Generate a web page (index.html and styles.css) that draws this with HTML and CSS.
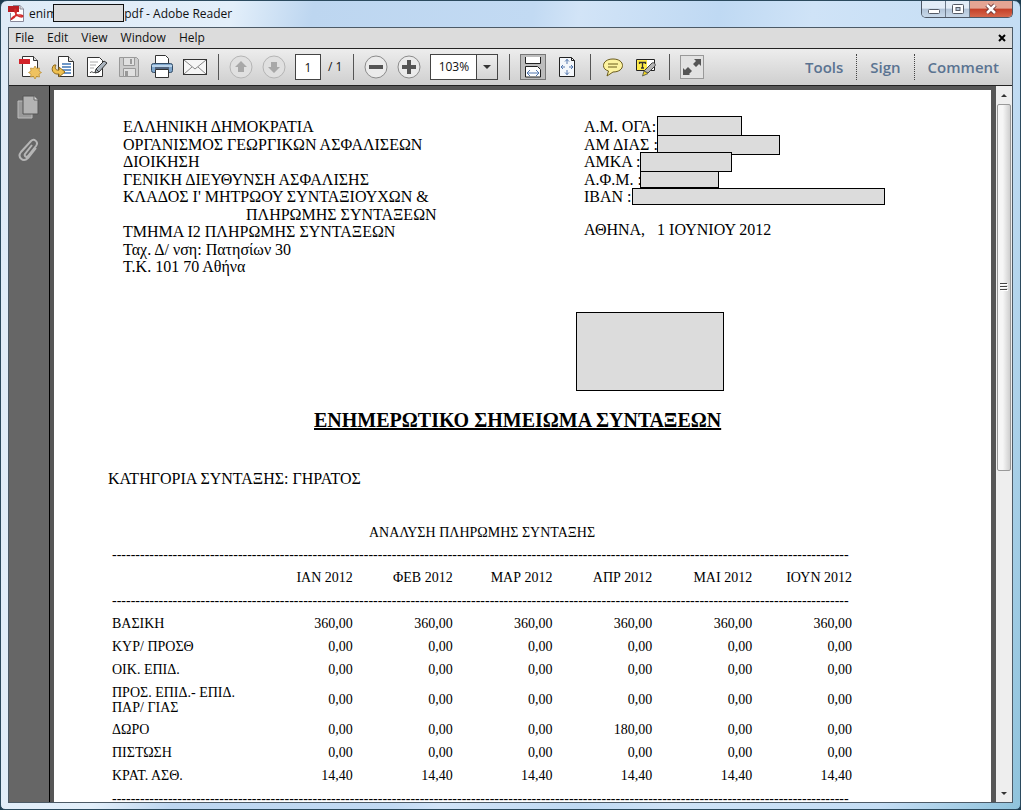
FILE: index.html
```html
<!DOCTYPE html>
<html lang="el">
<head>
<meta charset="utf-8">
<title>Adobe Reader</title>
<link rel="stylesheet" href="styles.css">
</head>
<body>
<div class="window">
  <header class="titlebar">
    <svg class="app-icon" width="17" height="17" viewBox="0 0 17 17"><path d="M5 .5h7l3.500 3.500v12.500H2.500V8" fill="#fff" stroke="#889"/><path d="M12 .5V4h3.500" fill="#ddd" stroke="#889"/><path d="M0 1h11v6H0z" fill="#b91f24"/><path d="M4 14c3-1 5-5 4-9-1-2-2 0-1 2 1 3 4 5 7 5 2-1 0-2-2-2-3 0-6 1-8 3-1 1-1 2 0 1z" fill="none" stroke="#d22a2a" stroke-width="1.300"/></svg>
    <h1 class="title">enim<span class="title-mask"></span>pdf - Adobe Reader</h1>
    <div class="controls">
      <button class="ctl" aria-label="Minimize"><svg width="14" height="12" viewBox="0 0 14 12"><rect x="1.500" y="6.500" width="11" height="4" rx="1" fill="#fff" stroke="#555b66"/></svg></button>
      <button class="ctl" aria-label="Maximize"><svg width="14" height="12" viewBox="0 0 14 12"><rect x="1.500" y="1.500" width="11" height="9" rx="1" fill="#fff" stroke="#555b66"/><rect x="5" y="4.500" width="4" height="3" fill="#b9c9dc" stroke="#555b66"/></svg></button>
      <button class="ctl ctl-close" aria-label="Close"><svg width="14" height="12" viewBox="0 0 14 12"><path d="M3 2l8 8M11 2l-8 8" stroke="#6b3434" stroke-width="4.500"/><path d="M3 2l8 8M11 2l-8 8" stroke="#fff" stroke-width="2.500"/></svg></button>
    </div>
  </header>
  <div class="client">
    <nav class="menubar">
      <button class="menu">File</button><button class="menu">Edit</button><button class="menu">View</button><button class="menu">Window</button><button class="menu">Help</button>
      <button class="menu-close" aria-label="Close document"><svg width="8" height="8" viewBox="0 0 8 8"><path d="M1 1l6 6M7 1L1 7" stroke="#000" stroke-width="2"/></svg></button>
    </nav>
    <div class="toolbar">
      <button class="tool" aria-label="Create PDF"><svg width="24" height="24" viewBox="0 0 24 24"><path d="M4.500 1.500h11l4 4v16h-15z" fill="#fff" stroke="#333"/><path d="M15.500 1.500v4h4" fill="#ddd" stroke="#333"/><path d="M1 4h11v5H1z" fill="#d2232a"/><path d="M17 11l1.500 2.500 3-.5-.5 3 2.500 1.500-2.500 1.500.5 3-3-.5L17 24l-1.500-2.500-3 .5.500-3-2.500-1.500L13 16l-.5-3 3 .5z" fill="#efc260" stroke="#b98a2c" stroke-width=".7"/></svg></button>
      <button class="tool" aria-label="Open"><svg width="24" height="24" viewBox="0 0 24 24"><path d="M7.500 1.500h10l5 5v15h-15z" fill="#fff" stroke="#333"/><path d="M17.500 1.500v5h5" fill="#ddd" stroke="#333"/><path d="M11 9h9M11 12h9M11 15h9M13 18h7" stroke="#3f75b5" stroke-width="1.500"/><path d="M3 10c-4 4-1 10 5 9v3l6-5-6-5v3c-3 1-5-2-3-5z" fill="#efc050" stroke="#8d691f"/></svg></button>
      <button class="tool" aria-label="Edit"><svg width="24" height="24" viewBox="0 0 24 24"><path d="M3.500 2.500h12l3 3v16h-15z" fill="#fff" stroke="#333"/><path d="M6 7h8M6 10h6M6 13h4" stroke="#aaa"/><path d="M6 18c2-3 3 1 5-1" stroke="#333" fill="none"/><path d="M11 18l1-4 8-8 3 2-8 9z" fill="#aab4be" stroke="#333"/><path d="M12 14l3 3" stroke="#333"/></svg></button>
      <button class="tool" aria-label="Save" disabled><svg width="24" height="24" viewBox="0 0 24 24"><path d="M2.500 2.500h17l2 2v17h-19z" fill="#ccc" stroke="#999"/><path d="M6.500 2.500h11v8h-11zM6.500 13.500h12v8h-12z" fill="#e0e0e0" stroke="#999"/><path d="M13 4h2v5h-2zM8 16h3v5H8z" fill="#999"/></svg></button>
      <button class="tool" aria-label="Print"><svg width="24" height="24" viewBox="0 0 24 24"><path d="M5.500.5h10l3 3v8h-13z" fill="#fff" stroke="#333"/><rect x="1.500" y="8.500" width="21" height="9" rx="2" fill="#7fa6cc" stroke="#334c66"/><path d="M2 11h20" stroke="#b9d3ea" stroke-width="2"/><path d="M5 13h14" stroke="#223"/><path d="M5.500 14.500h13v8h-13z" fill="#fff" stroke="#333"/></svg></button>
      <button class="tool" aria-label="Email"><svg width="24" height="24" viewBox="0 0 24 24"><rect x=".5" y="4.500" width="23" height="15" fill="#f6f6f6" stroke="#333"/><path d="M1 5l11 9 11-9M1 19l8-7M23 19l-8-7" fill="none" stroke="#888"/></svg></button>
      <span class="sep"></span>
      <button class="tool" aria-label="Previous page" disabled><svg width="24" height="24" viewBox="0 0 24 24"><circle cx="12" cy="12" r="11" fill="#e0e0e0" stroke="#b4b4b4"/><path d="M12 6l6 6h-3v5H9v-5H6z" fill="#a8a8a8"/></svg></button>
      <button class="tool" aria-label="Next page" disabled><svg width="24" height="24" viewBox="0 0 24 24"><circle cx="12" cy="12" r="11" fill="#e0e0e0" stroke="#b4b4b4"/><path d="M12 18l6-6h-3V7H9v5H6z" fill="#a8a8a8"/></svg></button>
      <input class="page-input" aria-label="Page" value="1"><span class="page-total">/ 1</span>
      <span class="sep"></span>
      <button class="tool" aria-label="Zoom out"><svg width="24" height="24" viewBox="0 0 24 24"><circle cx="12" cy="12" r="11" fill="#ebebeb" stroke="#8a8a8a"/><path d="M5 10h14v4H5z" fill="#555"/></svg></button>
      <button class="tool" aria-label="Zoom in"><svg width="24" height="24" viewBox="0 0 24 24"><circle cx="12" cy="12" r="11" fill="#ebebeb" stroke="#8a8a8a"/><path d="M5 10h5V5h4v5h5v4h-5v5h-4v-5H5z" fill="#555"/></svg></button>
      <div class="zoom"><input class="zoom-input" aria-label="Zoom" value="103%"><button class="zoom-drop" aria-label="Zoom levels"><svg width="8" height="4" viewBox="0 0 8 4"><path d="M0 0h8L4 4z" fill="#333"/></svg></button></div>
      <span class="sep"></span>
      <button class="tool tool-on" aria-label="Fit width"><svg width="20" height="22" viewBox="0 0 20 22"><path d="M2.500 1v6.500h15V1" fill="#fff" stroke="#222"/><path d="M2.500 21V10.500h12l3 3V21z" fill="#fff" stroke="#222"/><path d="M4 17h12M7 14l-3 3 3 3M13 14l3 3-3 3" fill="none" stroke="#5277ae"/></svg></button>
      <button class="tool" aria-label="Fit page"><svg width="24" height="22" viewBox="0 0 24 22"><path d="M4.500 1.500h12l3 3v16h-15z" fill="#f4f7fb" stroke="#222"/><path d="M16.500 1.500v3h3" fill="none" stroke="#222"/><path d="M12 3v5M12 19v-5M6 11h4M18 11h-4M10 5.500l2-2 2 2M10 16.500l2 2 2-2M8 9l-2 2 2 2M16 9l2 2-2 2" fill="none" stroke="#5277ae"/></svg></button>
      <span class="sep"></span>
      <button class="tool" aria-label="Add comment"><svg width="24" height="20" viewBox="0 0 24 20"><path d="M12 2c6 0 9.500 3 9.500 6.500S18 15 12 15l-6 4 1.500-5C4 13 2.500 11 2.500 8.500 2.500 5 6 2 12 2z" fill="#fdf3a0" stroke="#6b5c1c"/><path d="M7 7h10M7 10h9" stroke="#6b5c1c"/></svg></button>
      <button class="tool" aria-label="Highlight text"><svg width="24" height="20" viewBox="0 0 24 20"><path d="M2.500 2.500h18v11h-18z" fill="#fff" stroke="#222"/><path d="M3 3h10v10H3z" fill="#ffec4a"/><path d="M5.500 7V5.500h6V7M8.500 5.500V11M7 11h3" stroke="#333" fill="none" stroke-width="1.300"/><path d="M10 14l8-8c2-1 4 1 3 3l-7 7z" fill="#b5b5b5" stroke="#444"/><path d="M10 14l4 2.500L8.500 19z" fill="#f4d71d" stroke="#665"/></svg></button>
      <span class="sep"></span>
      <button class="tool tool-full" aria-label="Full screen"><svg width="22" height="22" viewBox="0 0 22 22"><path d="M13 3h7v7l-2-2-3 3-3-3 3-3zM2 19v-7l2 2 3-3 4 4-3 3 1 1z" fill="#555"/></svg></button>
      <div class="panes"><button class="pane">Tools</button><button class="pane">Sign</button><button class="pane">Comment</button></div>
    </div>
    <div class="workspace">
      <aside class="side">
        <button class="side-btn" aria-label="Page thumbnails"><svg width="22" height="24" viewBox="0 0 22 24"><path d="M1 6h14v17H1z" fill="#999" stroke="#bbb"/><path d="M6 1h11l4 4v14H6z" fill="#b3b3b3" stroke="#555"/><path d="M17 1v4h4" fill="#ddd" stroke="#666"/></svg></button>
        <button class="side-btn" aria-label="Attachments"><svg width="22" height="24" viewBox="0 0 22 24"><path d="M15 7l-7 9c-1 2 1 4 3 2l8-10c3-4-2-8-5-5L4 14c-4 5 2 11 7 6l8-10" fill="none" stroke="#b5b5b5" stroke-width="2"/></svg></button>
      </aside>
      <main class="page">
        <div class="heads">
          <address class="org">
            <div>ΕΛΛΗΝΙΚΗ ΔΗΜΟΚΡΑΤΙΑ</div><div>ΟΡΓΑΝΙΣΜΟΣ ΓΕΩΡΓΙΚΩΝ ΑΣΦΑΛΙΣΕΩΝ</div><div>ΔΙΟΙΚΗΣΗ</div><div>ΓΕΝΙΚΗ ΔΙΕΥΘΥΝΣΗ ΑΣΦΑΛΙΣΗΣ</div><div>ΚΛΑΔΟΣ Ι' ΜΗΤΡΩΟΥ ΣΥΝΤΑΞΙΟΥΧΩΝ &amp;</div><div class="indent">ΠΛΗΡΩΜΗΣ ΣΥΝΤΑΞΕΩΝ</div><div>ΤΜΗΜΑ Ι2 ΠΛΗΡΩΜΗΣ ΣΥΝΤΑΞΕΩΝ</div><div>Ταχ. Δ/ νση: Πατησίων 30</div><div>Τ.Κ. 101 70 Αθήνα</div>
          </address>
          <div class="person">
            <div>Α.Μ. ΟΓΑ:<i class="mask mask-oga"></i></div><div>ΑΜ ΔΙΑΣ :<i class="mask mask-dias"></i></div><div>ΑΜΚΑ :<i class="mask mask-amka"></i></div><div>Α.Φ.Μ. :<i class="mask mask-afm"></i></div><div>ΙΒΑΝ :<i class="mask mask-iban"></i></div>
            <p class="date">ΑΘΗΝΑ, &nbsp; 1 ΙΟΥΝΙΟΥ 2012</p>
          </div>
        </div>
        <div class="recipient"></div>
        <h2 class="doc-title">ΕΝΗΜΕΡΩΤΙΚΟ ΣΗΜΕΙΩΜΑ ΣΥΝΤΑΞΕΩΝ</h2>
        <p class="category">ΚΑΤΗΓΟΡΙΑ ΣΥΝΤΑΞΗΣ: ΓΗΡΑΤΟΣ</p>
        <table class="pay">
          <caption>ΑΝΑΛΥΣΗ ΠΛΗΡΩΜΗΣ ΣΥΝΤΑΞΗΣ</caption>
          <colgroup><col class="col-name"><col><col><col><col><col><col></colgroup>
          <thead>
            <tr class="rule"><td colspan="7">--------------------------------------------------------------------------------------------------------------------------------------------------------------</td></tr>
            <tr><td></td><th scope="col">ΙΑΝ 2012</th><th scope="col">ΦΕΒ 2012</th><th scope="col">ΜΑΡ 2012</th><th scope="col">ΑΠΡ 2012</th><th scope="col">ΜΑΙ 2012</th><th scope="col">ΙΟΥΝ 2012</th></tr>
            <tr class="rule"><td colspan="7">--------------------------------------------------------------------------------------------------------------------------------------------------------------</td></tr>
          </thead>
          <tbody>
            <tr><th scope="row">ΒΑΣΙΚΗ</th><td>360,00</td><td>360,00</td><td>360,00</td><td>360,00</td><td>360,00</td><td>360,00</td></tr>
            <tr><th scope="row">ΚΥΡ/ ΠΡΟΣΘ</th><td>0,00</td><td>0,00</td><td>0,00</td><td>0,00</td><td>0,00</td><td>0,00</td></tr>
            <tr><th scope="row">ΟΙΚ. ΕΠΙΔ.</th><td>0,00</td><td>0,00</td><td>0,00</td><td>0,00</td><td>0,00</td><td>0,00</td></tr>
            <tr class="tall"><th scope="row">ΠΡΟΣ. ΕΠΙΔ.- ΕΠΙΔ.<br>ΠΑΡ/ ΓΙΑΣ</th><td>0,00</td><td>0,00</td><td>0,00</td><td>0,00</td><td>0,00</td><td>0,00</td></tr>
            <tr><th scope="row">ΔΩΡΟ</th><td>0,00</td><td>0,00</td><td>0,00</td><td>180,00</td><td>0,00</td><td>0,00</td></tr>
            <tr><th scope="row">ΠΙΣΤΩΣΗ</th><td>0,00</td><td>0,00</td><td>0,00</td><td>0,00</td><td>0,00</td><td>0,00</td></tr>
            <tr><th scope="row">ΚΡΑΤ. ΑΣΘ.</th><td>14,40</td><td>14,40</td><td>14,40</td><td>14,40</td><td>14,40</td><td>14,40</td></tr>
            <tr class="rule"><td colspan="7">--------------------------------------------------------------------------------------------------------------------------------------------------------------</td></tr>
          </tbody>
        </table>
      </main>
      <div class="scroll">
        <button class="scroll-btn" aria-label="Scroll up"><svg width="6" height="3" viewBox="0 0 6 3"><path d="M0 3h6L3 0z" fill="#333"/></svg></button>
        <div class="track"><div class="thumb"><svg width="8" height="9" viewBox="0 0 8 9"><path d="M0 .5h7M0 3.500h7M0 6.500h7" stroke="#444"/><path d="M1 1.500h7M1 4.500h7M1 7.500h7" stroke="#fff"/></svg></div></div>
        <button class="scroll-btn" aria-label="Scroll down"><svg width="6" height="3" viewBox="0 0 6 3"><path d="M0 0h6L3 3z" fill="#333"/></svg></button>
      </div>
    </div>
  </div>
</div>
</body>
</html>
```

FILE: styles.css
```css
* { box-sizing: border-box; }
body { margin: 0; background: #1c3c50; }
button, input { font: inherit; color: inherit; margin: 0; padding: 0; border: 0; background: none; }
svg { display: block; }

.window {
  height: 100vh;
  display: flex;
  flex-direction: column;
  padding: 0 7px 6px;
  border: 1px solid #2b4a5e;
  border-radius: 7px 7px 5px 5px;
  background: linear-gradient(100deg, #dfebf7 0, #e3effa 20%, #bdd6f0 27%, #c2daf3 46%, #d2e4f7 50%, #bfd9f3 62%, #cfe3f7 70%, #c4ddf4 88%, #8fc3dc 100%);
  font: 12px/20px "Open Sans", "Noto Sans", sans-serif;
  color: #111;
  overflow: hidden;
}

.titlebar { display: flex; align-items: flex-start; flex: none; height: 26px; }
.app-icon { margin-top: 4px; }
.title { display: flex; margin: 3px 0 0 4px; font-size: 12px; line-height: 20px; font-weight: 400; white-space: nowrap; }
.title-mask { width: 71px; height: 18px; margin-left: -4px; background: #dcdcdc; border: 1px solid #111; }
.controls { display: flex; margin-left: auto; border: 1px solid #4d5866; border-top: 0; border-radius: 0 0 5px 5px; overflow: hidden; }
.ctl { display: flex; justify-content: center; align-items: center; width: 24px; height: 16px; background: linear-gradient(#e3edf7 45%, #b2c4d8 50%, #c8d9ea); border-right: 1px solid #6d7a8a; }
.ctl-close { width: 42px; border-right: 0; background: linear-gradient(#e4a493 45%, #c43f28 50%, #d6674c); }

.client { flex: 1; min-height: 0; display: flex; flex-direction: column; border: 1px solid #4c5a66; }

.menubar { display: flex; align-items: center; flex: none; height: 20px; padding-right: 6px; background: #dcdcdc; }
.menu { padding: 0 7px 0 6px; line-height: 18px; }
.menu-close { margin-left: auto; }

.toolbar { display: flex; align-items: center; flex: none; height: 38px; padding-left: 9px; gap: 9px; border-top: 1px solid #222; border-bottom: 1px solid #222; background: linear-gradient(#ededed, #cfcfcf); }
.tool { flex: none; }
.sep { flex: none; width: 1px; height: 26px; margin: 0 1px 0 2px; background: #555; }
.page-input { width: 26px; height: 26px; border: 1px solid #444; background: #fff; text-align: center; }
.page-total { margin-left: -2px; }
.zoom { display: flex; width: 68px; height: 26px; border: 1px solid #444; background: #fff; }
.zoom-input { width: 45px; text-align: center; }
.zoom-drop { flex: 1; display: flex; align-items: center; justify-content: center; border-left: 1px solid #444; background: linear-gradient(#eee, #d4d4d4); }
.tool-on { padding: 1px 2px; border: 1px solid #777; background: #bdbdbd; }
.tool-full { border: 1px solid #999; background: #e2e2e2; }
.panes { display: flex; margin-left: auto; font-size: 15px; font-weight: 600; color: #5a7391; }
.pane { padding: 0 13px; height: 26px; border-left: 1px dotted #444; }
.pane:first-child { border-left: 0; }

.workspace { flex: 1; min-height: 0; display: flex; background: #565656; }
.side { flex: none; width: 41px; padding: 9px 8px; display: flex; flex-direction: column; gap: 19px; border-right: 1px solid #000; background: #666; }

.page { flex: 1; min-width: 0; margin: 4px 5px 0 4px; padding: 28px 0 0 54px; overflow: hidden; background: #fff; color: #000; font: 16px/18px "Liberation Serif", serif; }
.heads { display: flex; padding-left: 15px; }
.org { width: 461px; font-style: normal; }
.org div, .person div { height: 18px; white-space: nowrap; }
.org div:nth-child(even), .person div:nth-child(even) { height: 17px; }
.org .indent { padding-left: 123px; }
.person div { position: relative; }
.mask { position: absolute; height: 20px; border: 1px solid #000; background: #dcdcdc; }
.mask-oga { left: 73px; top: -2px; width: 85px; }
.mask-dias { left: 73px; top: -1px; width: 123px; }
.mask-amka { left: 56px; top: -1px; width: 92px; }
.mask-afm { left: 56px; top: 0; width: 79px; height: 17px; }
.mask-iban { left: 48px; top: 0; width: 253px; height: 17px; }
.date { margin: 15px 0 0; white-space: nowrap; }
.recipient { width: 148px; height: 79px; margin: 36px 0 0 468px; border: 1px solid #000; background: #dcdcdc; }
.doc-title { margin: 17px 0 0 206px; font-size: 20px; line-height: 24px; text-decoration: underline; text-decoration-thickness: 2px; white-space: nowrap; }
.category { margin: 38px 0 0; }

.pay { width: 740px; margin: 35px 0 0 4px; table-layout: fixed; border-collapse: collapse; font-size: 14px; line-height: 15px; }
.pay caption { padding: 2px 0 3px; text-align: center; }
.pay th, .pay td { height: 23px; padding: 0; font-weight: 400; text-align: right; white-space: nowrap; }
.pay .col-name { width: 141px; }
.pay tbody th { text-align: left; }
.pay .tall th { height: 37px; }
.pay .rule td { text-align: left; }

.scroll { flex: none; width: 16px; display: flex; flex-direction: column; background: #eee; }
.scroll-btn { display: flex; align-items: center; justify-content: center; height: 18px; }
.track { flex: 1; }
.thumb { display: flex; align-items: center; justify-content: center; height: 54%; margin: 0 1px; border: 1px solid #999; border-radius: 2px; background: linear-gradient(90deg, #f6f6f6 40%, #cfcfcf); }
```
